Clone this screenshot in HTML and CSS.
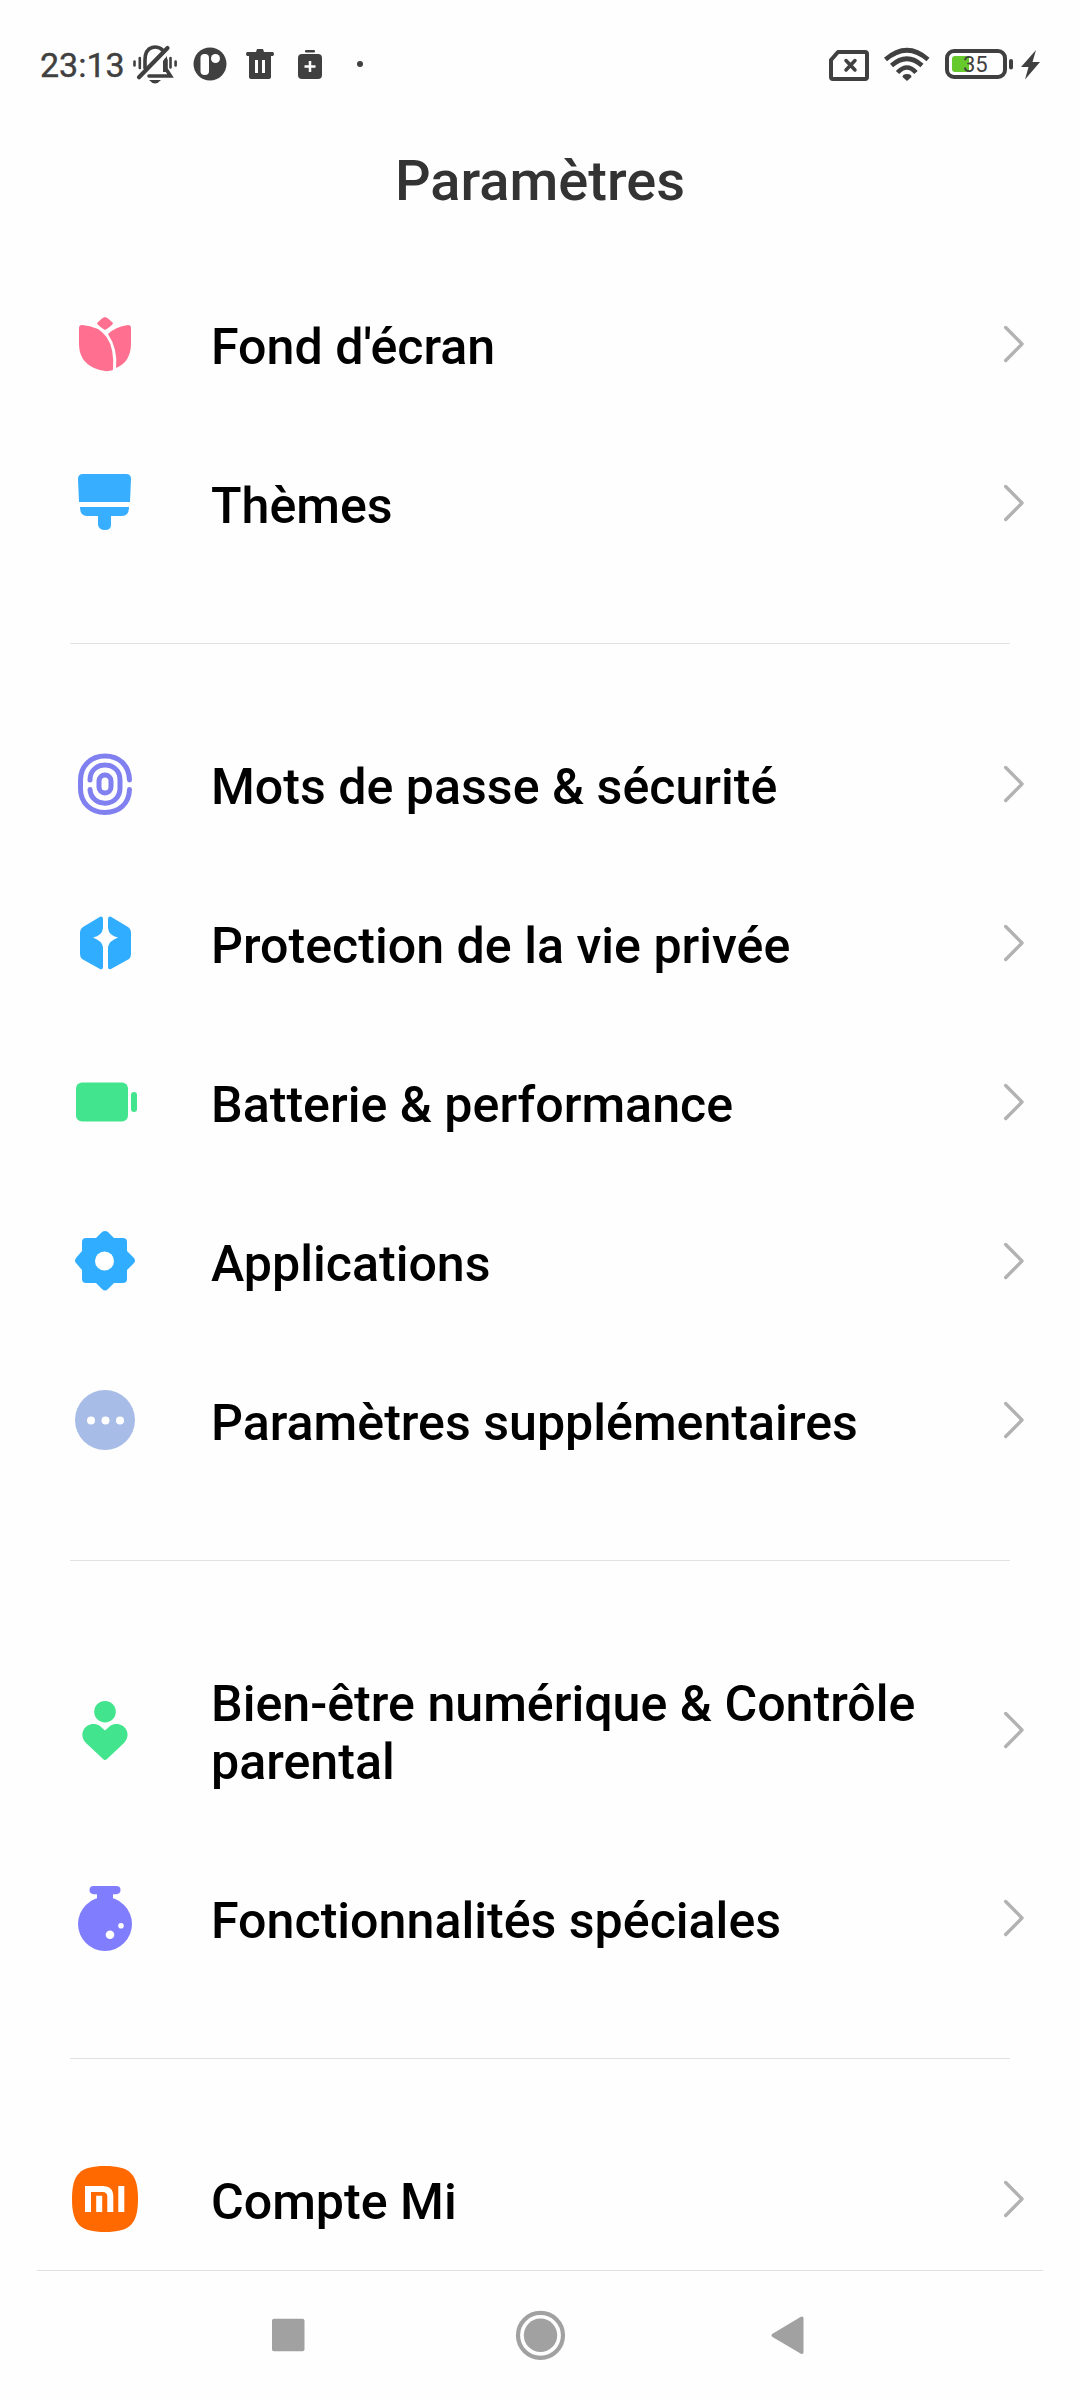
FILE: index.html
```
<!DOCTYPE html>
<html lang="fr">
<head>
<meta charset="utf-8">
<title>Paramètres</title>
<link rel="stylesheet" href="styles.css">
</head>
<body>
<svg class="defs" width="0" height="0"><symbol id="chev" viewBox="0 0 24 40"><path d="M3.700 3.500 20 20 3.700 36.500" fill="none" stroke="#b2b2b2" stroke-width="3.400" stroke-linecap="round" stroke-linejoin="round"/></symbol></svg>
<header class="status">
  <span class="time">23:13</span>
  <svg class="notifications" width="240" height="70" viewBox="130 30 240 70" fill="#404040">
    <g fill="none" stroke="#404040" stroke-width="3.600" stroke-linecap="round">
      <path d="M145 68V60C145 45 158 45 163 50.500"/><path d="M139 77.300 167.500 48" stroke-width="4.200"/>
      <path d="M149 76H170.500L166 69V60"/>
      <path d="M134.500 61.500V65.500M139.800 58V68M170.500 58V67.500M175.600 61.500V65.500" stroke-width="2.600"/>
    </g>
    <path d="M149 80H161Q155 87 149 80M163 61 167 56V72H163Z"/>
    <circle cx="210" cy="64" r="16.500"/>
    <rect x="200.500" y="54" width="8.500" height="21" rx="4" fill="#fff"/><circle cx="215.500" cy="58.500" r="4.500" fill="#fff"/>
    <path d="M247 52H256L257 49H263L264 52H273Q275 54 273 56H271V77Q271 79 269 79H251Q249 79 249 77V56H247Q245 54 247 52Z"/>
    <path d="M256.500 60V73M263.500 60V73" stroke="#fff" stroke-width="3"/>
    <rect x="305" y="50" width="10" height="2.500" rx="1"/><rect x="298" y="54" width="24" height="25" rx="4"/>
    <path d="M310 61V72M304.500 66.500H315.500" stroke="#fff" stroke-width="2.500"/>
    <circle cx="360" cy="64" r="3"/>
  </svg>
  <div class="system">
    <svg width="116" height="70" viewBox="829 30 116 70" fill="none" stroke="#404040">
      <path d="M838 52H865Q867 52 867 54V77Q867 79 865 79H833Q831 79 831 77V60Z" stroke-width="4" stroke-linejoin="round"/>
      <path d="M846 60.500 855 70M855 60.500 846 70" stroke-width="3.500" stroke-linecap="round"/>
      <path d="M885.500 59.500Q907 41 928 59.500M891.500 65.500Q907 52 922 65.500M897.500 72.500Q907 62.500 916 72.500" stroke-width="4.600"/>
      <path d="M902.500 77Q902.500 74 907 74T911.500 77L907 81Z" fill="#404040" stroke="none"/>
    </svg>
    <div class="battery"><i class="level"></i><span class="percent">35</span></div>
    <svg width="33" height="70" viewBox="1007 30 33 70" fill="#404040"><rect x="1009" y="59" width="4" height="10.500" rx="2"/><path d="M1036 50 1021 67H1028.500L1025 79.500 1040 62H1032.500Z"/></svg>
  </div>
</header>
<h1 class="title">Paramètres</h1>
<main class="settings">
  <section class="group">
    <a class="row"><svg class="icon" viewBox="0 0 90 90" fill="#ff6f8f"><path d="M45 17Q47 17 53 23Q53 25 45 30Q37 25 37 23Q43 17 45 17Z"/><path d="M22 25Q56 27 53 70Q45 73 34 68Q19 61 19 44V28Q19 25 22 25Z"/><path d="M48 34Q55 27 68 25Q71 25 71 28V43Q71 62 56 68Q58 49 48 34Z"/></svg><span class="label">Fond d'écran</span><svg class="chevron"><use href="#chev"/></svg></a>
    <a class="row"><svg class="icon" viewBox="0 0 90 90" fill="#37aeff"><path d="M23 15H66Q71 15 71 20L70 43H19L18 20Q18 15 23 15Z"/><path d="M20 48H69Q69 57 62 57H51V66Q51 71 45 71T38 66V57H27Q20 57 20 48Z"/></svg><span class="label">Thèmes</span><svg class="chevron"><use href="#chev"/></svg></a>
  </section>
  <section class="group">
    <a class="row"><svg class="icon" viewBox="0 0 90 90" fill="none" stroke="#8080f0" stroke-width="5" stroke-linecap="round"><path d="M69.500 40C69 25 59 16 45 16S20.500 26 20.500 40V49C20.500 63 31 72.500 45 72.500S69 64 69.500 49.500M30 40C30 20 60 20 60 40V48C60 68 31 68 30 49.500"/><rect x="39" y="35" width="12" height="18" rx="6"/></svg><span class="label">Mots de passe &amp; sécurité</span><svg class="chevron"><use href="#chev"/></svg></a>
    <a class="row"><svg class="icon" viewBox="0 0 90 90" fill="#30adff"><path d="M40.500 17.500Q43 17 43 20V29Q42 37 33 38.500Q42 42 43 48V68Q43 71 40 70L22 60Q20 58 20 55V34Q20 30 23 28Z"/><path d="M50.500 17.500Q48 17 48 20V29Q49 37 58 38.500Q49 42 48 48V68Q48 71 51 70L69 60Q71 58 71 55V34Q71 30 68 28Z"/></svg><span class="label">Protection de la vie privée</span><svg class="chevron"><use href="#chev"/></svg></a>
    <a class="row"><svg class="icon" viewBox="0 0 90 90" fill="#42e58d"><rect x="16" y="24.500" width="52" height="39" rx="6"/><rect x="71" y="34" width="6" height="20" rx="3"/></svg><span class="label">Batterie &amp; performance</span><svg class="chevron"><use href="#chev"/></svg></a>
    <a class="row"><svg class="icon" viewBox="0 0 90 90" fill="#30adff"><path d="M42 15Q45 13 48 15L54 21H63Q67 21 67 25V34L74 41Q76 44 74 46L67 53V62Q67 66 63 66H54L48 72Q45 75 42 72L36 66H26Q22 66 22 62V53L16 46Q14 44 16 41L22 34V25Q22 21 26 21H36Z"/><circle cx="44.500" cy="44" r="9.500" fill="#fff"/></svg><span class="label">Applications</span><svg class="chevron"><use href="#chev"/></svg></a>
    <a class="row"><svg class="icon" viewBox="0 0 90 90" fill="#a8bce8"><circle cx="45" cy="44" r="30"/><g fill="#fff"><circle cx="31" cy="44.500" r="4"/><circle cx="45.500" cy="44.500" r="4"/><circle cx="60" cy="44.500" r="4"/></g></svg><span class="label">Paramètres supplémentaires</span><svg class="chevron"><use href="#chev"/></svg></a>
  </section>
  <section class="group">
    <a class="row tall"><svg class="icon" viewBox="0 0 90 90" fill="#42e58d"><circle cx="45" cy="25.700" r="10.800"/><path d="M43 73 26 57C16 46 29 33 40 40L45 44.500 50 40C61 33 74 46 64 57L47 73Q45 75 43 73Z"/></svg><span class="label">Bien-être numérique &amp; Contrôle parental</span><svg class="chevron"><use href="#chev"/></svg></a>
    <a class="row"><svg class="icon" viewBox="0 0 90 90" fill="#807eff"><rect x="29.500" y="12" width="31" height="8.200" rx="4.100"/><path d="M37 17H53V30H37Z"/><circle cx="45" cy="50" r="27"/><g fill="#fff"><circle cx="50" cy="60.700" r="4.300"/><circle cx="61" cy="51.800" r="2.800"/></g></svg><span class="label">Fonctionnalités spéciales</span><svg class="chevron"><use href="#chev"/></svg></a>
  </section>
  <section class="group">
    <a class="row"><svg class="icon" viewBox="0 0 90 90"><path d="M45 11C70 11 78 19 78 44S70 77 45 77 12 69 12 44 20 11 45 11Z" fill="#ff6900"/><g fill="none" stroke="#fff" stroke-width="6"><path d="M28 57V34H42.500Q50.300 34 50.300 41.500V57M39.200 40.700V57M61.300 31V57"/></g></svg><span class="label">Compte Mi</span><svg class="chevron"><use href="#chev"/></svg></a>
  </section>
</main>
<nav class="navbar">
  <svg width="1080" height="129" viewBox="0 2271 1080 129" fill="#a1a1a1"><rect x="272" y="2318.700" width="32.500" height="32.500" rx="2"/><circle cx="540.500" cy="2335.300" r="22.500" fill="none" stroke="#a1a1a1" stroke-width="4.200"/><circle cx="540.500" cy="2335.300" r="16.700"/><path d="M772.500 2333.800 800.500 2317Q803.500 2315.500 803.500 2318.500V2352Q803.500 2355 800.500 2353.500L772.500 2337Q770.500 2335.400 772.500 2333.800Z"/></svg>
</nav>
</body>
</html>
```
FILE: styles.css
```
* { box-sizing: border-box; }
body { margin: 0; width: 1080px; height: 2400px; overflow: hidden; display: flex; flex-direction: column; background: #fefefe; font-family: Roboto, sans-serif; color: #000; }
.defs { display: block; height: 0; flex: none; }

.status { height: 100px; flex: none; padding: 30px 40px 0; display: flex; color: #404040; }
.time { width: 90px; line-height: 70px; font-size: 34px; -webkit-text-stroke: 0.4px #404040; white-space: nowrap; }
.system { display: flex; margin-left: auto; }
.battery { position: relative; width: 62px; height: 30px; margin-top: 19px; padding: 3px; border: 4px solid #404040; border-radius: 9px; }
.level { display: block; width: 17px; height: 16px; border-radius: 3px 0 0 3px; background: #66c92c; }
.percent { position: absolute; left: 14px; top: 0; line-height: 24px; font-size: 22px; }

.title { margin: 0; height: 165px; flex: none; padding-top: 48px; line-height: 66px; text-align: center; font-size: 56px; font-weight: 500; color: #333; }

.settings { flex: 1; min-height: 0; overflow: hidden; }
.group + .group { padding-top: 61px; }
.group:not(:last-child)::after { content: ""; display: block; height: 1px; margin: 60px 70px 0; background: #e2e2e2; }
.row { display: flex; align-items: center; height: 159px; padding: 0 54px 0 60px; }
.row.tall { height: 217px; }
.icon { width: 90px; height: 90px; flex: none; margin-top: 1px; }
.label { width: 760px; margin-left: 61px; padding-top: 4px; font-size: 50.15px; font-weight: 500; line-height: 58px; }
.chevron { width: 24px; height: 40px; margin-left: auto; margin-bottom: 1px; }

.navbar { height: 130px; flex: none; }
.navbar::before { content: ""; display: block; height: 1px; margin: 0 37px; background: #e0e0e0; }
.navbar svg { display: block; }
```
